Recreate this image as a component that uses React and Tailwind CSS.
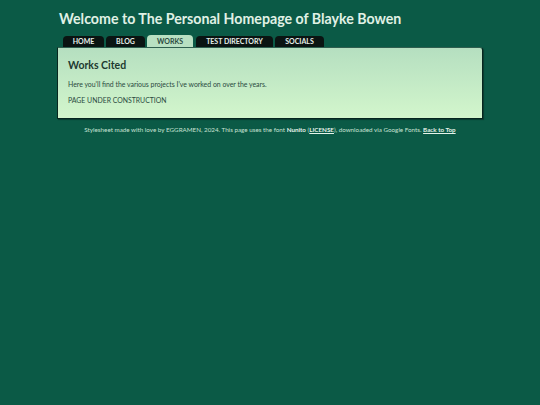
export default function App() {
  return (
    <div className="min-h-[405px] bg-[#0b5a46] font-['Lato','Noto_Sans',sans-serif] text-white">
      <div className="mx-auto w-[426px] pt-[10px]">
        <h1 className="ml-[2px] h-[24px] text-[14.2px] leading-[18px] font-bold text-[#e0f1e5]">
          Welcome to The Personal Homepage of Blayke Bowen
        </h1>
        <nav className="ml-[6px] mt-[1px] flex h-[12px] items-end text-[7px] font-bold text-[#e6efe9]">
          <a className="flex h-[11px] w-[41px] items-center justify-center rounded-t-[4px] bg-[#0a1412]">HOME</a>
          <a className="ml-[2px] flex h-[11px] w-[39px] items-center justify-center rounded-t-[4px] bg-[#0a1412]">BLOG</a>
          <a className="relative z-10 ml-[2px] flex h-[12px] w-[46px] items-center justify-center rounded-t-[4px] bg-[#b8e0c2] text-[#2a4a3e]">WORKS</a>
          <a className="ml-[3px] flex h-[11px] w-[77px] items-center justify-center rounded-t-[4px] bg-[#0a1412]">TEST DIRECTORY</a>
          <a className="ml-[2px] flex h-[11px] w-[49px] items-center justify-center rounded-t-[4px] bg-[#0a1412]">SOCIALS</a>
        </nav>
        <main className="h-[72px] rounded-tr-[3px] border border-[#07261f] border-t-[#2f5f4f] bg-gradient-to-b from-[#b5dfc0] to-[#d3f6cc] pl-[10px] pt-[10px] text-[#2a4a3e] shadow-[1px_1px_1px_#0a3a2e]">
          <h2 className="text-[10.5px] leading-[14px] font-bold text-[#1d3a30]">Works Cited</h2>
          <p className="mt-[7px] text-[6.9px] leading-[10px]">Here you'll find the various projects I've worked on over the years.</p>
          <p className="mt-[6px] text-[6.9px] leading-[10px]">PAGE UNDER CONSTRUCTION</p>
        </main>
        <footer className="mt-[6px] text-center text-[6.27px] leading-[9px] text-[#c9e2d4]">
          Stylesheet made with love by EGGRAMEN, 2024. This page uses the font <b className="text-[#e6f3ea]">Nunito</b> (<a className="font-bold text-[#e6f3ea] underline">LICENSE</a>), downloaded via Google Fonts. <a className="font-bold text-[#e6f3ea] underline">Back to Top</a>
        </footer>
      </div>
    </div>
  );
}
